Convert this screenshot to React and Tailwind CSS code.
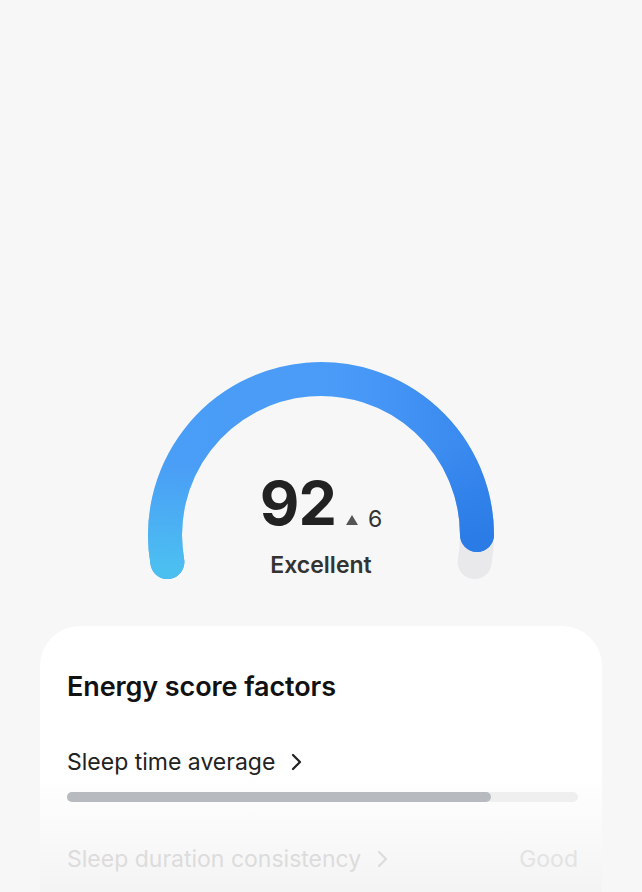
import React from 'react';

const ChevronRight = ({ className }) => (
  <svg viewBox="0 0 12 20" className={className} fill="none" stroke="currentColor" strokeWidth="2.2" strokeLinecap="round" strokeLinejoin="round">
    <path d="M3 3l7 7-7 7" />
  </svg>
);

const Gauge = () => (
  <div className="relative w-[360px] h-[240px]">
    <svg width="360" height="240" viewBox="0 0 360 240" className="absolute inset-0">
      <defs>
        <linearGradient id="arcMain" gradientUnits="userSpaceOnUse" x1="20" y1="0" x2="345" y2="0">
          <stop offset="0" stopColor="#4a9ef6" />
          <stop offset="0.55" stopColor="#4a9bf8" />
          <stop offset="1" stopColor="#3787ee" />
        </linearGradient>
        <linearGradient id="arcLeft" gradientUnits="userSpaceOnUse" x1="0" y1="225" x2="0" y2="120">
          <stop offset="0" stopColor="#4cbff1" stopOpacity="1" />
          <stop offset="1" stopColor="#4cbff1" stopOpacity="0" />
        </linearGradient>
        <linearGradient id="arcRight" gradientUnits="userSpaceOnUse" x1="0" y1="200" x2="0" y2="100">
          <stop offset="0" stopColor="#2a7be6" stopOpacity="1" />
          <stop offset="1" stopColor="#2a7be6" stopOpacity="0" />
        </linearGradient>
      </defs>
      <path d="M336 190 A156 156 0 0 1 333.63 217.09" stroke="#e9e9eb" strokeWidth="34" strokeLinecap="round" fill="none" />
      <path d="M26.37 217.09 A156 156 0 1 1 336 190" stroke="url(#arcMain)" strokeWidth="34" strokeLinecap="round" fill="none" />
      <path d="M26.37 217.09 A156 156 0 0 1 45 112" stroke="url(#arcLeft)" strokeWidth="34" strokeLinecap="round" fill="none" />
      <path d="M315 112 A156 156 0 0 1 336 190" stroke="url(#arcRight)" strokeWidth="34" strokeLinecap="round" fill="none" />
    </svg>
    <div className="absolute left-0 right-0 top-[128px] flex flex-col items-center">
      <div className="flex items-end gap-[9px]">
        <span className="text-[61px] leading-[61px] font-bold text-[#222] tracking-[-1px]">92</span>
        <span className="flex items-center gap-[9px] mb-[3px]">
          <svg width="14" height="12" viewBox="0 0 14 12"><path d="M7 1L13 11H1z" fill="#555" /></svg>
          <span className="text-[23px] leading-[23px] text-[#333]">6</span>
        </span>
      </div>
      <span className="mt-[17px] text-[23px] leading-[28px] font-semibold text-[#333]">Excellent</span>
    </div>
  </div>
);

export default function App() {
  return (
    <div className="w-[642px] h-[892px] overflow-hidden bg-[#f7f7f7] flex flex-col items-center pt-[345px]" style={{ fontFamily: 'Inter, "Noto Sans", sans-serif' }}>
      <Gauge />
      <div className="mt-[41px] w-[562px] flex-1 rounded-t-[40px] bg-gradient-to-b from-white from-[55%] to-[#f4f4f4] pl-[27px] pr-[24px] pt-[44px]">
        <h2 className="text-[27px] leading-[34px] font-semibold text-[#111] tracking-[-0.1px]">Energy score factors</h2>
        <div className="mt-[44px] flex items-center gap-[15px] text-[#222]">
          <span className="text-[23px] leading-[28px]">Sleep time average</span>
          <ChevronRight className="w-[12px] h-[20px]" />
        </div>
        <div className="mt-[16px] h-[10px] w-full rounded-full bg-[#efefef]">
          <div className="h-full w-[83%] rounded-full bg-[#b7bbbf]" />
        </div>
        <div className="mt-[43px] flex items-center justify-between text-[#dcdcdc]">
          <div className="flex items-center gap-[15px]">
            <span className="text-[23px] leading-[28px]">Sleep duration consistency</span>
            <ChevronRight className="w-[12px] h-[20px]" />
          </div>
          <span className="text-[23px] leading-[28px] text-[#e3e3e3]">Good</span>
        </div>
      </div>
    </div>
  );
}
